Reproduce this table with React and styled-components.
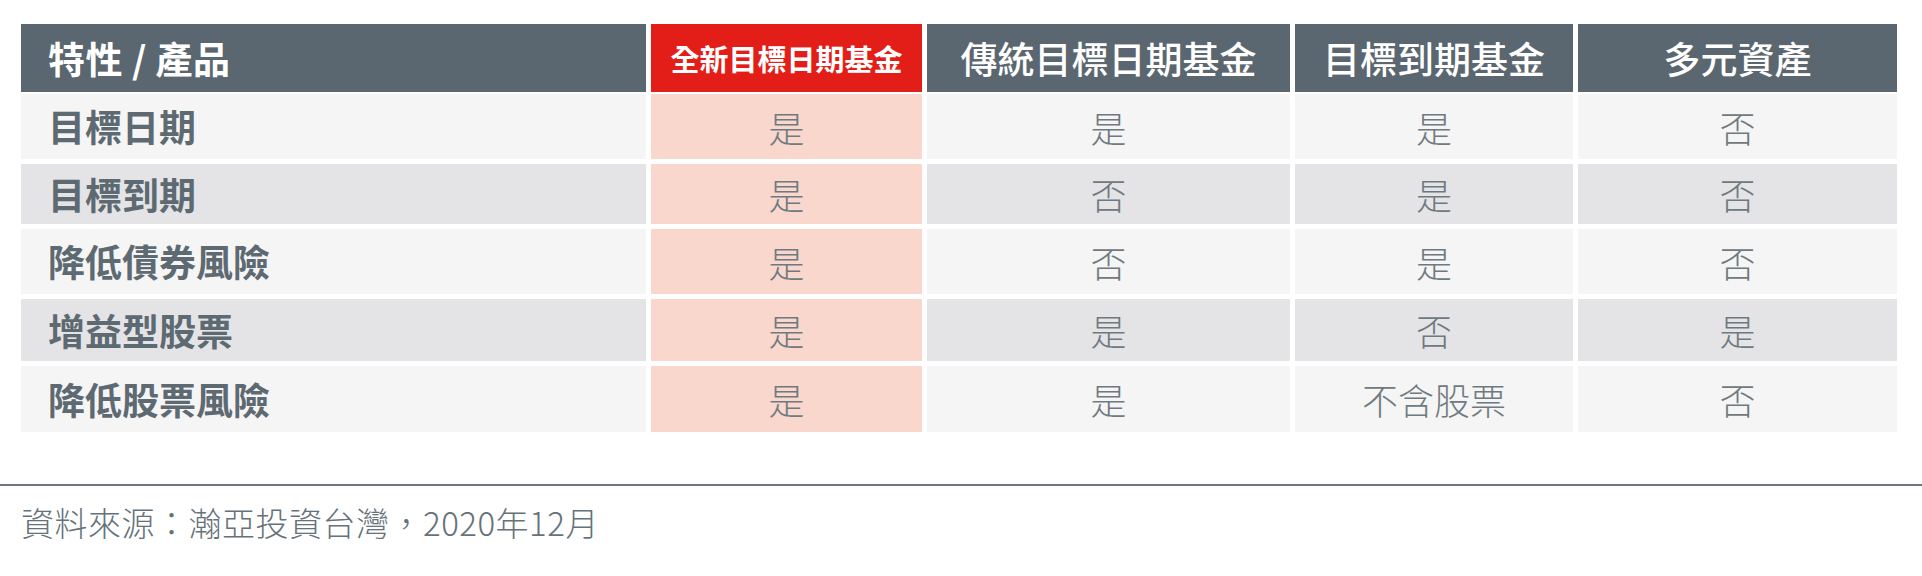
import React from 'react';
import styled, { createGlobalStyle } from 'styled-components';

const GlobalStyle = createGlobalStyle`
    html, body {
        margin: 0;
        padding: 0;
        background: #ffffff;
    }
    body {
        font-family: "Noto Sans CJK TC", "Noto Sans", "Liberation Sans", sans-serif;
    }
`

const Root = styled.div`
    width: 1922px;
    height: 576px;
    padding-top: 24px;
    box-sizing: border-box;
    background: #ffffff;
`

const Table = styled.div`
    display: flex;
    flex-direction: column;
    gap: 5px;
    margin-left: 21px;
    width: 1876px;
`

const Row = styled.div`
    display: grid;
    grid-template-columns: 625px 271px 363px 278px 319px;
    column-gap: 5px;
    height: ${p => p.h}px;
    margin-bottom: ${p => (p.head ? '-3px' : '0')};
`

const HeadCell = styled.div`
    display: flex;
    align-items: center;
    justify-content: ${p => (p.left ? 'flex-start' : 'center')};
    padding-left: ${p => (p.left ? '27px' : '0')};
    background: ${p => (p.hot ? '#e31e19' : '#5b6770')};
    color: #ffffff;
    font-size: ${p => (p.hot ? '29px' : '37px')};
    font-weight: ${p => (p.left || p.hot ? 700 : 500)};
    letter-spacing: ${p => (p.left ? '0.5px' : '0')};
    line-height: 1;
    white-space: nowrap;
`

const Label = styled.div`
    display: flex;
    align-items: center;
    padding-left: 27px;
    background: ${p => (p.alt ? '#e4e4e6' : '#f5f5f5')};
    color: #5e6a72;
    font-size: 37px;
    font-weight: 700;
    line-height: 1;
`

const Value = styled.div`
    display: flex;
    align-items: center;
    justify-content: center;
    background: ${p => (p.hot ? '#f9d7cd' : p.alt ? '#e4e4e6' : '#f5f5f5')};
    color: #6f7a80;
    font-size: 36px;
    font-weight: 300;
    line-height: 1;
`

const Divider = styled.div`
    margin-top: 52px;
    height: 2px;
    background: #6b7780;
`

const Source = styled.p`
    margin: 20px 0 0 21px;
    font-size: 33px;
    letter-spacing: 0.5px;
    line-height: 1;
    color: #66727a;
    font-weight: 300;
`

const heads = ['特性 / 產品', '全新目標日期基金', '傳統目標日期基金', '目標到期基金', '多元資產'];

const rows = [
    { label: '目標日期', h: 65, values: ['是', '是', '是', '否'] },
    { label: '目標到期', h: 60, values: ['是', '否', '是', '否'] },
    { label: '降低債券風險', h: 65, values: ['是', '否', '是', '否'] },
    { label: '增益型股票', h: 62, values: ['是', '是', '否', '是'] },
    { label: '降低股票風險', h: 66, values: ['是', '是', '不含股票', '否'] },
];

const App = () => (
    <Root>
        <GlobalStyle />
        <Table>
            <Row h={68} head>
                {heads.map((t, i) => (
                    <HeadCell key={t} left={i === 0} hot={i === 1}>{t}</HeadCell>
                ))}
            </Row>
            {rows.map((r, i) => (
                <Row key={r.label} h={r.h}>
                    <Label alt={i % 2 === 1}>{r.label}</Label>
                    {r.values.map((v, j) => (
                        <Value key={j} hot={j === 0} alt={i % 2 === 1}>{v}</Value>
                    ))}
                </Row>
            ))}
        </Table>
        <Divider />
        <Source>資料來源：瀚亞投資台灣，2020年12月</Source>
    </Root>
);

export default App;
